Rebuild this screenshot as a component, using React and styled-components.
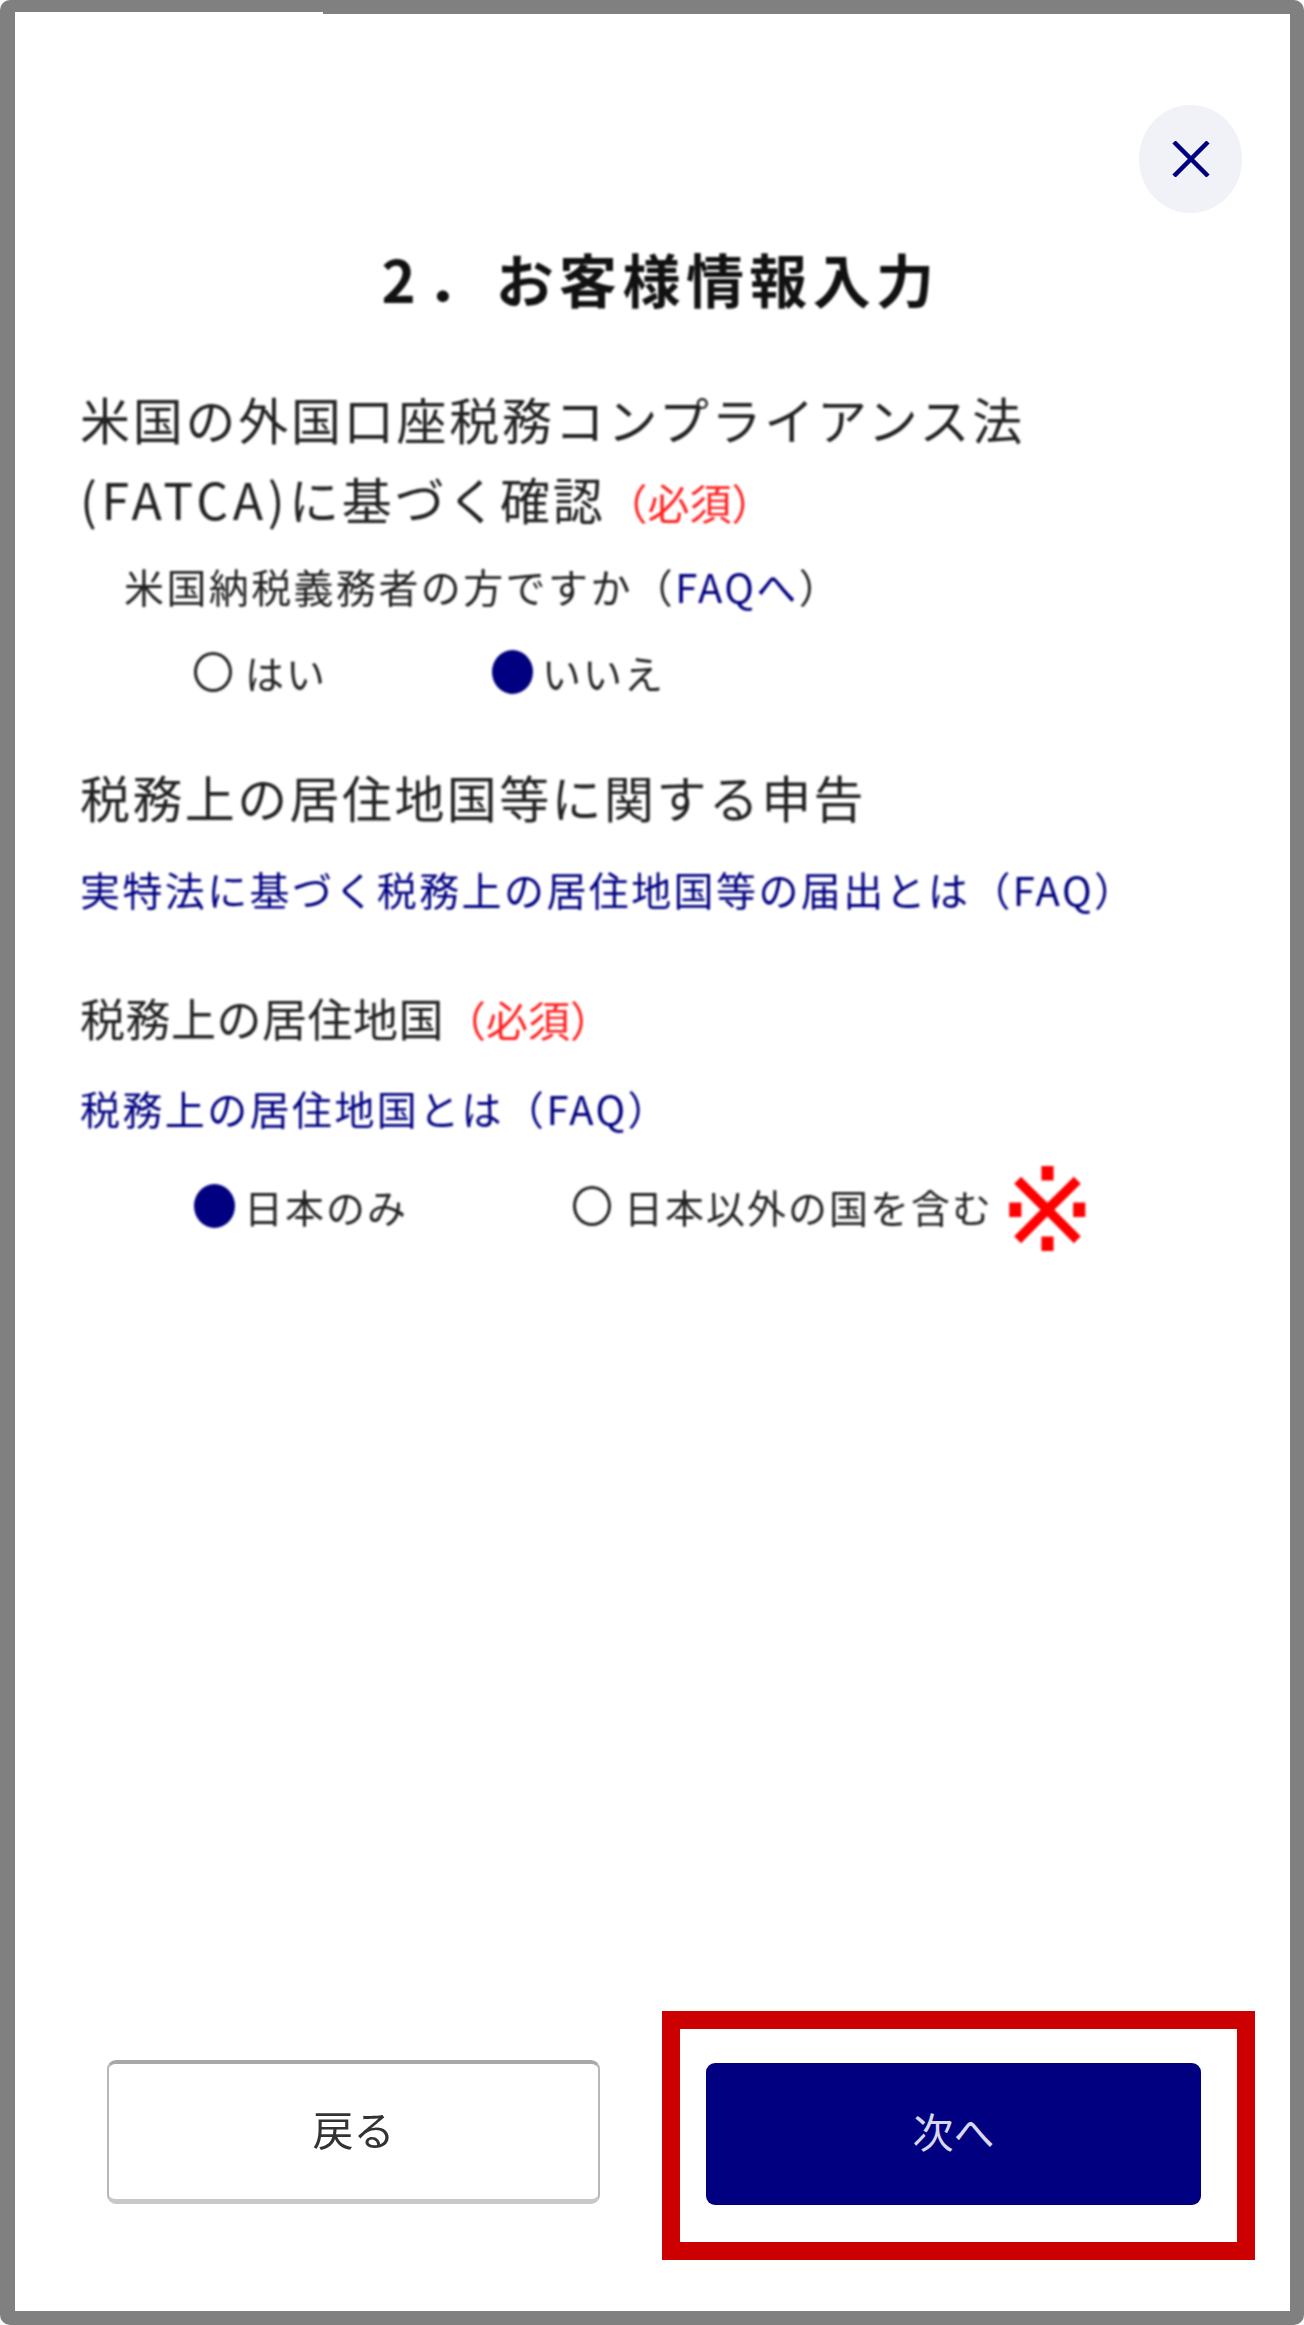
import React from "react";
import styled, { createGlobalStyle } from "styled-components";

const GlobalStyle = createGlobalStyle`
  html, body {
    margin: 0;
    padding: 0;
    background: #fff;
  }
  body {
    font-family: "Noto Sans CJK JP", "Liberation Sans", sans-serif;
    color: #222;
  }
`;

const Frame = styled.div`
  box-sizing: border-box;
  width: 1304px;
  height: 2325px;
  display: flex;
  flex-direction: column;
  border: solid #808080;
  border-width: 12px 14px 14px 15px;
  border-radius: 10px;
  background: #fff;
`;

const TopEdge = styled.div`
  height: 2px;
  margin-left: 308px;
  background: #808080;
`;

const CloseRow = styled.div`
  display: flex;
  justify-content: flex-end;
  padding: 91px 48px 0 0;
`;

const CloseButton = styled.button`
  width: 103px;
  height: 108px;
  padding: 0;
  border: 0;
  border-radius: 50%;
  background: #f0f2f8;
  display: flex;
  align-items: center;
  justify-content: center;
`;

const Title = styled.h1`
  margin: 35px 0 0;
  padding-left: 16px;
  text-align: center;
  font-size: 58px;
  line-height: 60px;
  font-weight: 700;
  letter-spacing: 5.4px;
  color: #111;
  filter: blur(0.8px);
`;

const TitleNumber = styled.span`
  letter-spacing: 11px;
`;

const Body = styled.div`
  padding-left: 65px;
  filter: blur(0.9px);
`;

const Heading = styled.h2`
  margin: ${(p) => p.$top}px 0 0;
  font-size: 50px;
  line-height: ${(p) => p.$line}px;
  font-weight: 400;
  letter-spacing: ${(p) => p.$spacing}px;
  color: #222;
`;

const Latin = styled.span`
  letter-spacing: 4.5px;
`;

const Required = styled.span`
  font-size: 42px;
  letter-spacing: 0;
  color: #ff2020;
`;

const SubLabel = styled.div`
  margin: ${(p) => p.$top}px 0 0 ${(p) => p.$indent || 0}px;
  font-size: ${(p) => p.$size || 40}px;
  line-height: 50px;
  letter-spacing: ${(p) => p.$spacing || 1}px;
  color: #222;
`;

const FaqLink = styled.a`
  display: block;
  margin-top: ${(p) => p.$top}px;
  font-size: 40px;
  line-height: 50px;
  letter-spacing: 2.4px;
  color: #000080;
`;

const InlineLink = styled.span`
  color: #000080;
`;

const RadioRow = styled.div`
  display: flex;
  align-items: center;
  gap: ${(p) => p.$gap}px;
  margin-top: ${(p) => p.$top}px;
  padding-left: 114px;
  height: 50px;
`;

const RadioOption = styled.label`
  display: flex;
  align-items: center;
  gap: 13px;
  font-size: 39px;
  line-height: 50px;
  letter-spacing: 2px;
  color: #222;
`;

const RadioDot = styled.span`
  box-sizing: border-box;
  width: ${(p) => (p.$on ? 41 : 38)}px;
  height: ${(p) => (p.$on ? 44 : 40)}px;
  margin-right: ${(p) => (p.$on ? -4 : 0)}px;
  border-radius: 50%;
  border: ${(p) => (p.$on ? "0" : "3px solid #222")};
  background: ${(p) => (p.$on ? "#000080" : "#fff")};
`;

const NoteMark = styled.span`
  margin: 8px 0 0 -8px;
  font-family: "DejaVu Sans", "Noto Sans CJK JP", sans-serif;
  font-size: 118px;
  line-height: 50px;
  font-weight: 400;
  color: #ff0000;
`;

const Footer = styled.div`
  margin-top: auto;
  display: flex;
  justify-content: space-between;
  align-items: center;
  padding: 0 35px 51px 92px;
`;

const BackButton = styled.button`
  box-sizing: border-box;
  width: 493px;
  height: 144px;
  margin-bottom: 7px;
  border: 2px solid #b8b8b8;
  border-top: 4px solid #a8a8a8;
  border-bottom: 5px solid #c8c8c8;
  border-radius: 9px;
  background: #fff;
  font-family: inherit;
  font-size: 41px;
  color: #333;
  padding: 0 0 8px;
  filter: blur(0.4px);
`;

const Highlight = styled.div`
  box-sizing: border-box;
  width: 593px;
  height: 249px;
  padding: 34px 36px 35px 26px;
  border: 18px solid #cc0000;
  background: #fff;
`;

const NextButton = styled.button`
  width: 495px;
  height: 142px;
  border: 0;
  border-radius: 9px;
  background: #000080;
  font-family: inherit;
  font-size: 41px;
  color: #d8d8ee;
  padding: 0 0 8px;
`;

const App = () => (
  <>
    <GlobalStyle />
    <Frame>
      <TopEdge />
      <CloseRow>
        <CloseButton aria-label="閉じる">
          <svg width="38" height="36" viewBox="0 0 38 36" fill="none">
            <path d="M2 1 L36 35 M36 1 L2 35" stroke="#000080" strokeWidth="4.5" />
          </svg>
        </CloseButton>
      </CloseRow>
      <Title>
        <TitleNumber>2．</TitleNumber>お客様情報入力
      </Title>
      <Body>
        <Heading $top={70} $line={80} $spacing={2.75}>
          米国の外国口座税務コンプライアンス法
          <br />
          <Latin>(FATCA)</Latin>に基づく確認
          <Required>（必須）</Required>
        </Heading>
        <SubLabel $top={19} $indent={44} $spacing={2.4}>
          米国納税義務者の方ですか（<InlineLink>FAQへ</InlineLink>）
        </SubLabel>
        <RadioRow $top={36} $gap={165}>
          <RadioOption>
            <RadioDot />
            はい
          </RadioOption>
          <RadioOption>
            <RadioDot $on />
            いいえ
          </RadioOption>
        </RadioRow>
        <Heading $top={69} $line={60} $spacing={2.4}>
          税務上の居住地国等に関する申告
        </Heading>
        <FaqLink $top={38}>実特法に基づく税務上の居住地国等の届出とは（FAQ）</FaqLink>
        <SubLabel $top={79} $size={45} $spacing={0.5}>
          税務上の居住地国
          <Required>（必須）</Required>
        </SubLabel>
        <FaqLink $top={39}>税務上の居住地国とは（FAQ）</FaqLink>
        <RadioRow $top={48} $gap={165}>
          <RadioOption>
            <RadioDot $on />
            日本のみ
          </RadioOption>
          <RadioOption>
            <RadioDot />
            日本以外の国を含む
            <NoteMark>※</NoteMark>
          </RadioOption>
        </RadioRow>
      </Body>
      <Footer>
        <BackButton>戻る</BackButton>
        <Highlight>
          <NextButton>次へ</NextButton>
        </Highlight>
      </Footer>
    </Frame>
  </>
);

export default App;
